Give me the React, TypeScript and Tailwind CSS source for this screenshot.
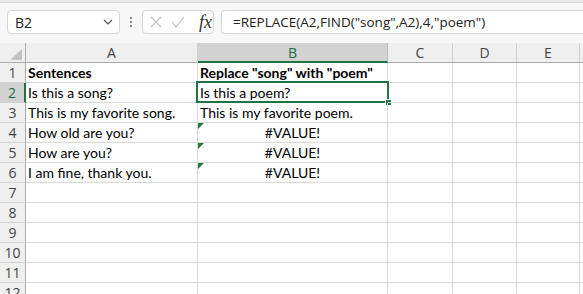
const cols = ["A", "B", "C", "D", "E"];
const widths = ["w-[172px]", "w-[190px]", "w-[65px]", "w-[64px]", "w-[63px]"];

type Cell = { text?: string; bold?: boolean; center?: boolean; err?: boolean };

const rows: Cell[][] = [
  [{ text: "Sentences", bold: true }, { text: 'Replace "song" with "poem"', bold: true }],
  [{ text: "Is this a song?" }, { text: "Is this a poem?" }],
  [{ text: "This is my favorite song." }, { text: "This is my favorite poem." }],
  [{ text: "How old are you?" }, { text: "#VALUE!", center: true, err: true }],
  [{ text: "How are you?" }, { text: "#VALUE!", center: true, err: true }],
  [{ text: "I am fine, thank you." }, { text: "#VALUE!", center: true, err: true }],
  [], [], [], [], [], [],
];

const ui = "font-['Open_Sans','Noto_Sans',sans-serif]";
const cellFont = "font-['Lato','Open_Sans',sans-serif]";

function FormulaBar() {
  return (
    <div className="h-[43px] bg-[#f7f7f7] flex flex-col">
      <div className="h-[3px] bg-[#ececec] border-b border-[#d9d9d9]" />
      <div className="flex items-center pt-[7px] pl-[7px] gap-[7px]">
        <div className="w-[113px] h-[24px] bg-white border border-[#d6d6d6] rounded-[4px] flex items-center justify-between pl-[7px] pr-[6px]">
          <span className={`${ui} text-[14px] text-[#222]`}>B2</span>
          <svg width="10" height="6" viewBox="0 0 10 6">
            <path d="M1 1l4 4 4-4" fill="none" stroke="#555" strokeWidth="1.2" />
          </svg>
        </div>
        <div className="flex flex-col gap-[2px] mx-[3px]">
          <div className="w-[2px] h-[2px] bg-[#888]" />
          <div className="w-[2px] h-[2px] bg-[#888]" />
          <div className="w-[2px] h-[2px] bg-[#888]" />
        </div>
        <div className="w-[72px] h-[24px] bg-white border border-[#d6d6d6] rounded-[4px] flex items-center pl-[7px] gap-[9px]">
          <svg width="12" height="12" viewBox="0 0 12 12">
            <path d="M1 1l10 10M11 1L1 11" stroke="#c4c4c4" strokeWidth="1.2" />
          </svg>
          <svg width="14" height="12" viewBox="0 0 14 12">
            <path d="M1 6l4 5 8-10" fill="none" stroke="#c4c4c4" strokeWidth="1.2" />
          </svg>
          <span className="font-['Liberation_Serif',serif] italic text-[18px] leading-none text-[#333] ml-[5px]">fx</span>
        </div>
        <div className="flex-1 h-[24px] bg-white border border-[#d6d6d6] rounded-l-[4px] border-r-0 flex items-center pl-[11px]">
          <span className={`${ui} text-[13.5px] text-[#222] whitespace-nowrap`}>
            =REPLACE(A2,FIND("song",A2),4,"poem")
          </span>
        </div>
      </div>
    </div>
  );
}

export default function App() {
  return (
    <div className="w-[583px] h-[294px] overflow-hidden bg-white">
      <FormulaBar />
      <div className={ui}>
        <div className="flex h-[20px] bg-[#efefef]">
          <div className="w-[26px] shrink-0 border-r border-b border-[#ababab] relative">
            <svg className="absolute left-[10px] top-[6px]" width="12" height="11" viewBox="0 0 12 11">
              <path d="M12 0L12 11L0 11Z" fill="#c2c2c2" />
            </svg>
          </div>
          {cols.map((c, i) => (
            <div
              key={c}
              className={`${widths[i]} shrink-0 border-r flex items-center justify-center text-[14px] ${
                c === "B"
                  ? "bg-[#d2d2d2] border-b-2 border-b-[#217346] border-r-[#bdbdbd] text-[#1d6b3d]"
                  : "border-b border-b-[#ababab] border-r-[#d0d0d0] text-[#444]"
              }`}
            >
              {c}
            </div>
          ))}
          <div className="flex-1 border-b border-[#ababab]" />
        </div>
        {rows.map((r, ri) => (
          <div key={ri} className="flex h-[20px]">
            <div
              className={`w-[26px] shrink-0 border-b border-[#d4d4d4] flex items-center justify-center text-[14px] ${
                ri === 1
                  ? "bg-[#d2d2d2] border-r-2 border-r-[#217346] text-[#1d6b3d]"
                  : "bg-[#efefef] border-r border-r-[#ababab] text-[#444]"
              }`}
            >
              {ri + 1}
            </div>
            {cols.map((c, ci) => {
              const cell = r[ci];
              return (
                <div
                  key={c}
                  className={`${widths[ci]} shrink-0 relative border-r border-b border-[#d9d9d9] flex items-center px-[2px] ${cellFont} text-[14px] text-black whitespace-nowrap ${
                    cell?.center ? "justify-center" : ""
                  } ${cell?.bold ? "font-bold" : ""}`}
                >
                  {cell?.err && (
                    <div className="absolute left-0 top-0 w-0 h-0 border-t-[6px] border-t-[#1e7b3a] border-r-[6px] border-r-transparent" />
                  )}
                  {cell?.text}
                  {ri === 1 && ci === 1 && (
                    <div className="absolute left-[-2px] top-[-2px] right-[-2px] bottom-[-1px] border-2 border-[#217346]">
                      <div className="absolute right-[-5px] bottom-[-5px] w-[7px] h-[7px] bg-[#217346] border border-white" />
                    </div>
                  )}
                </div>
              );
            })}
            <div className="flex-1 border-b border-[#d9d9d9]" />
          </div>
        ))}
      </div>
    </div>
  );
}
